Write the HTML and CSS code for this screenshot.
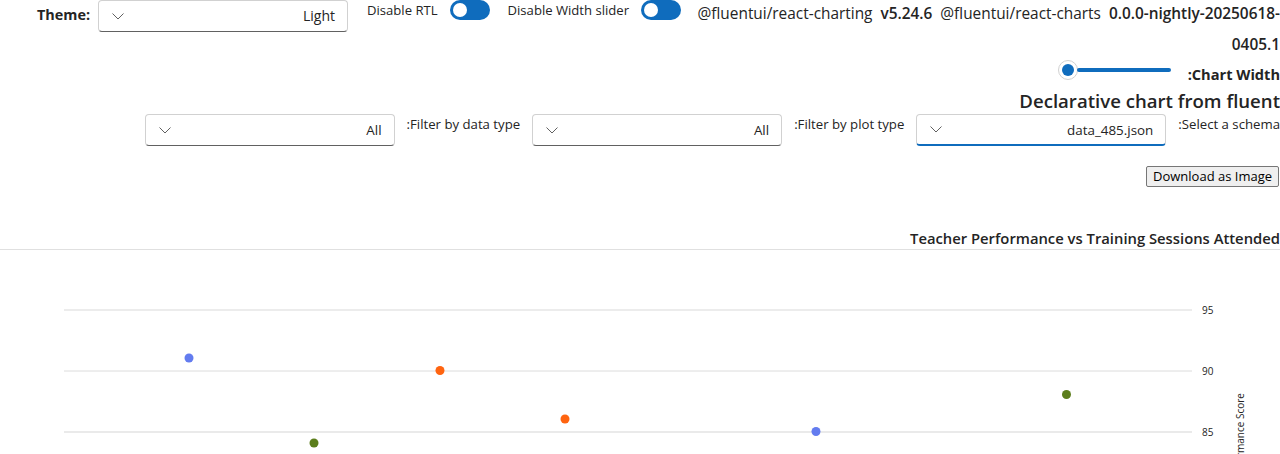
FILE: index.html
```html
<!DOCTYPE html>
<html lang="en">
<head>
<meta charset="utf-8">
<title>Declarative chart</title>
<link rel="stylesheet" href="styles.css">
</head>
<body>
<div class="top">
  <span class="theme-label">Theme:</span>
  <div class="dropdown theme-dd" dir="rtl">
    <span class="dd-value">Light</span>
    <svg class="chev" width="12" height="7" viewBox="0 0 12 7"><path d="M0.5 0.5 L6 6 L11.5 0.5" fill="none" stroke="#616161" stroke-width="1"/></svg>
  </div>
  <div class="toggle-group first">
    <span>Disable RTL</span>
    <span class="toggle"><span class="knob"></span></span>
  </div>
  <div class="toggle-group second">
    <span>Disable Width slider</span>
    <span class="toggle"><span class="knob"></span></span>
  </div>
  <div class="versions">@fluentui/react-charting&nbsp; <b>v5.24.6</b>&nbsp; @fluentui/react-charts&nbsp; <b>0.0.0-nightly-20250618-<br>0405.1</b></div>
</div>

<div class="rtl-area" dir="rtl">
  <div class="slider-row">
    <span class="bold-label">Chart Width:</span>
    <div class="slider"><span class="thumb"><span class="thumb-dot"></span></span><span class="track"></span></div>
  </div>
  <h1 class="heading">Declarative chart from fluent</h1>
  <div class="filter-row">
    <span class="flabel">Select a schema:</span>
    <div class="dropdown focused">
      <span class="dd-value">data_485.json</span>
      <svg class="chev" width="12" height="7" viewBox="0 0 12 7"><path d="M0.5 0.5 L6 6 L11.5 0.5" fill="none" stroke="#616161" stroke-width="1"/></svg>
    </div>
    <span class="flabel">Filter by plot type:</span>
    <div class="dropdown">
      <span class="dd-value">All</span>
      <svg class="chev" width="12" height="7" viewBox="0 0 12 7"><path d="M0.5 0.5 L6 6 L11.5 0.5" fill="none" stroke="#616161" stroke-width="1"/></svg>
    </div>
    <span class="flabel">Filter by data type:</span>
    <div class="dropdown">
      <span class="dd-value">All</span>
      <svg class="chev" width="12" height="7" viewBox="0 0 12 7"><path d="M0.5 0.5 L6 6 L11.5 0.5" fill="none" stroke="#616161" stroke-width="1"/></svg>
    </div>
  </div>
  <div class="button-row"><button class="download">Download as Image</button></div>
  <div class="chart-title">Teacher Performance vs Training Sessions Attended</div>
</div>

<svg class="chart" width="1280" height="204" viewBox="0 0 1280 204">
  <line x1="64" y1="60" x2="1192" y2="60" stroke="#d9d9d9" stroke-width="1"/>
  <line x1="64" y1="121" x2="1192" y2="121" stroke="#dcdcdc" stroke-width="1"/>
  <line x1="64" y1="182" x2="1192" y2="182" stroke="#e3e3e3" stroke-width="1.5"/>
  <text x="1202" y="64" class="tick">95</text>
  <text x="1202" y="125" class="tick">90</text>
  <text x="1202" y="186" class="tick">85</text>
  <text class="axis-title" transform="translate(1244 143) rotate(-90)" text-anchor="end">Performance Score</text>
  <circle cx="189" cy="108" r="4.5" fill="#637cef"/>
  <circle cx="314" cy="193" r="4.5" fill="#5c7e1c"/>
  <circle cx="440" cy="120.5" r="4.5" fill="#ff6410"/>
  <circle cx="565" cy="169" r="4.5" fill="#ff6410"/>
  <circle cx="816" cy="181.5" r="4.5" fill="#637cef"/>
  <circle cx="1066.5" cy="144.5" r="4.5" fill="#5c7e1c"/>
</svg>
</body>
</html>
```

FILE: styles.css
```css
html, body {
  margin: 0;
  padding: 0;
  background: #ffffff;
  color: #242424;
  font-family: "Open Sans", "Noto Sans", sans-serif;
  font-size: 14px;
  overflow: hidden;
}

.top {
  display: flex;
  align-items: flex-start;
  padding-left: 37px;
  height: 60px;
}

.theme-label {
  font-weight: 700;
  line-height: 30px;
  font-size: 14.4px;
}

.dropdown {
  box-sizing: border-box;
  width: 250px;
  height: 32px;
  border: 1px solid #d1d1d1;
  border-bottom-color: #616161;
  border-radius: 4px;
  display: flex;
  align-items: center;
  justify-content: space-between;
  padding: 0 12px 0 13px;
  background: #fff;
  flex: none;
}

.dropdown .dd-value {
  font-size: 14px;
  line-height: 20px;
}

.dropdown.focused {
  border-bottom: 2px solid #0f6cbd;
}

.theme-dd {
  margin-left: 8px;
}

.toggle-group {
  display: flex;
  align-items: center;
  height: 20px;
  gap: 12px;
  font-size: 13.1px;
}

.toggle-group.first {
  margin-left: 19px;
}

.toggle-group.second {
  margin-left: 18px;
}

.toggle {
  box-sizing: border-box;
  width: 40px;
  height: 20px;
  border-radius: 10px;
  background: #0f6cbd;
  display: flex;
  align-items: center;
  padding-left: 3px;
}

.knob {
  width: 14px;
  height: 14px;
  border-radius: 50%;
  background: #ffffff;
}

.versions {
  flex: 1;
  margin-left: 12px;
  text-align: right;
  font-size: 15.4px;
  line-height: 31px;
  margin-top: -2px;
  white-space: nowrap;
}

.versions b {
  font-weight: 600;
}

.rtl-area {
  text-align: right;
}

.slider-row {
  display: flex;
  align-items: flex-start;
  gap: 17px;
  height: 28px;
}

.bold-label {
  font-weight: 700;
  font-size: 14.6px;
  line-height: 28px;
}

.slider {
  direction: ltr;
  display: flex;
  align-items: center;
  height: 20px;
  width: 113px;
}

.thumb {
  box-sizing: border-box;
  width: 20px;
  height: 20px;
  border-radius: 50%;
  border: 1px solid #d1d1d1;
  background: #fff;
  display: flex;
  align-items: center;
  justify-content: center;
  flex: none;
}

.thumb-dot {
  width: 12px;
  height: 12px;
  border-radius: 50%;
  background: #0f6cbd;
}

.track {
  flex: 1;
  height: 4px;
  border-radius: 2px;
  background: #0f6cbd;
  margin-left: -1px;
}

.heading {
  margin: 0;
  font-size: 18.6px;
  font-weight: 600;
  line-height: 26px;
}

.filter-row {
  display: flex;
  align-items: flex-start;
  gap: 12px;
  height: 32px;
}

.flabel {
  font-size: 13.2px;
  line-height: 20px;
  white-space: nowrap;
}

.dropdown:not(.theme-dd) .dd-value {
  font-size: 13.4px;
}

.button-row {
  margin-top: 20px;
  padding-right: 1px;
  height: 21px;
}

.download {
  font-family: "Open Sans", "Noto Sans", sans-serif;
  font-size: 13px;
  line-height: 15px;
  height: 21px;
  padding: 1px 6px;
  border: 1px solid #767676;
  border-radius: 2px;
  background: #efefef;
  color: #000;
}

.chart-title {
  margin-top: 41px;
  font-size: 14.8px;
  font-weight: 600;
  line-height: 21px;
  height: 21px;
  border-bottom: 1px solid #e0e0e0;
}

.chart {
  display: block;
}

.tick {
  font-family: "Open Sans", "Noto Sans", sans-serif;
  font-size: 10px;
  fill: #242424;
}

.axis-title {
  font-family: "Open Sans", "Noto Sans", sans-serif;
  font-size: 10px;
  fill: #242424;
}
```
